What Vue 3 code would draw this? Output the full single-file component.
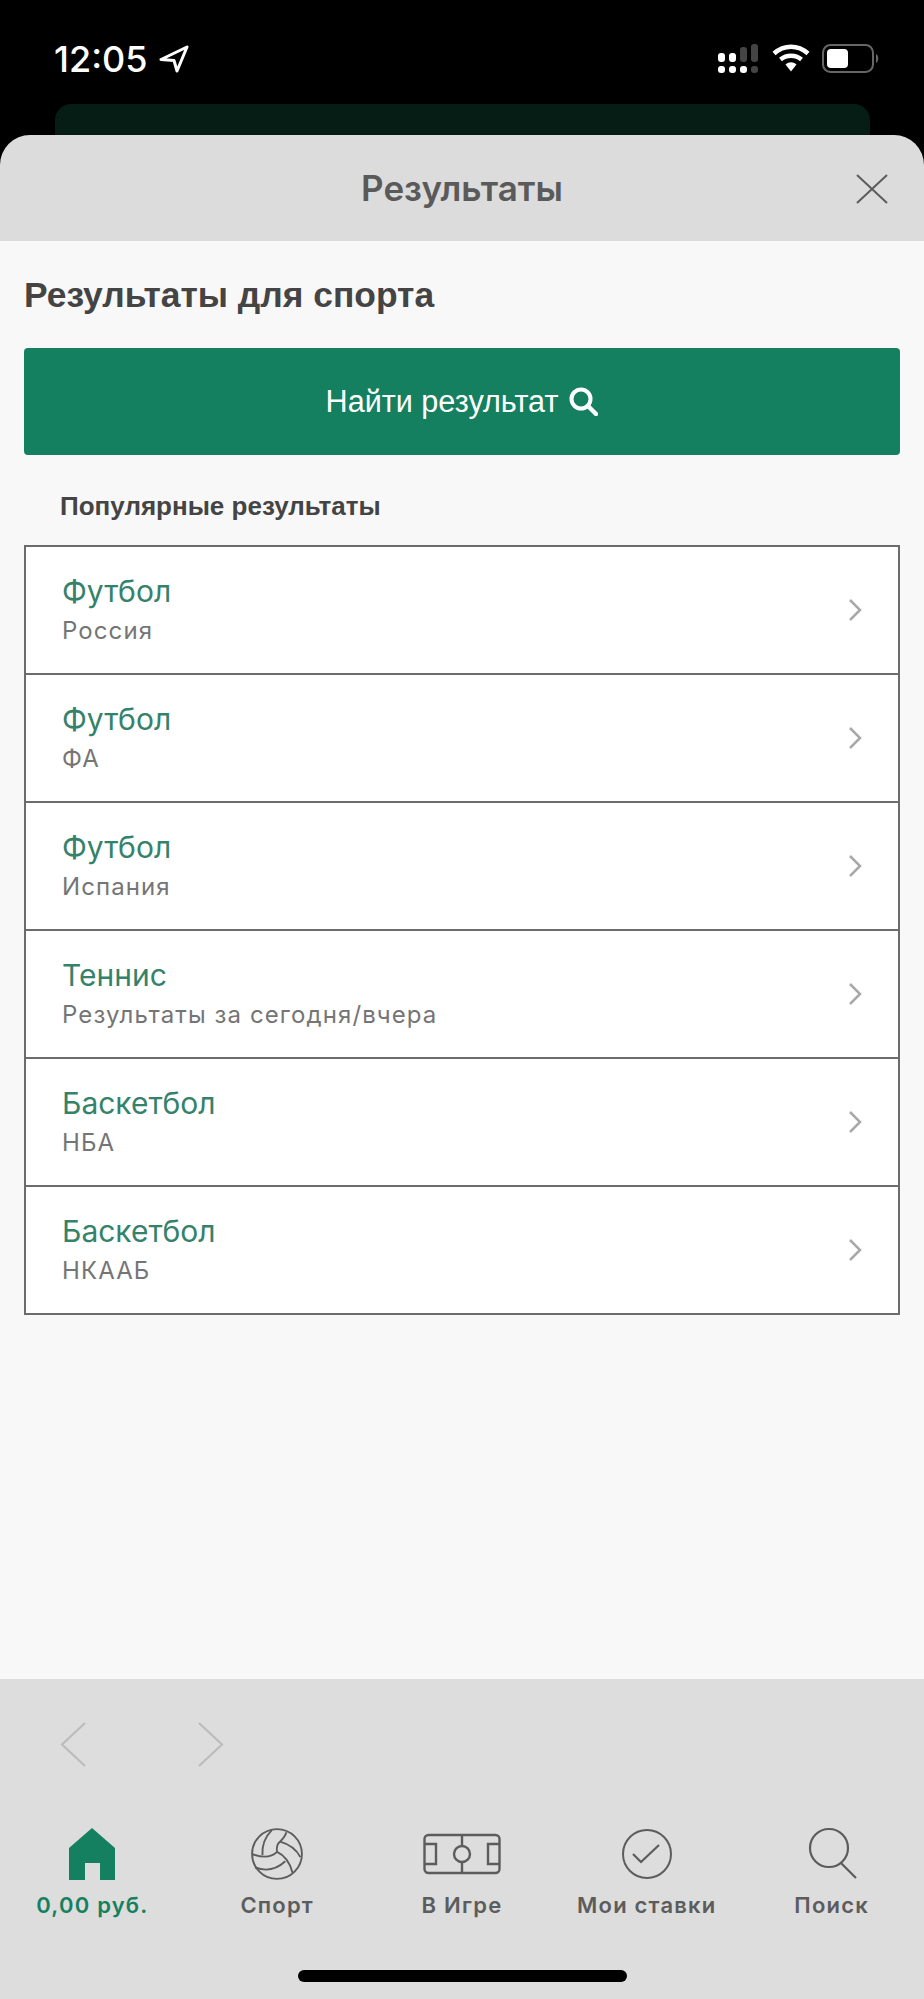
<template>
  <div class="screen">
    <div class="status">
      <div class="status-row">
        <div class="clock">
          <span>12:05</span>
          <svg width="30" height="28" viewBox="0 0 30 28" fill="none">
            <path d="M28 2 L2 14.5 L15 15.5 L18 26 Z" stroke="#fff" stroke-width="3" stroke-linejoin="round" />
          </svg>
        </div>
        <div class="status-icons">
          <svg width="42" height="30" viewBox="0 0 42 30">
            <rect x="0" y="9" width="7" height="9" rx="3" fill="#fff" />
            <rect x="11" y="9" width="7" height="9" rx="3" fill="#fff" />
            <rect x="22" y="3" width="7" height="15" rx="3" fill="#444" />
            <rect x="33" y="0" width="7" height="18" rx="3" fill="#444" />
            <rect x="0" y="22" width="7" height="7" rx="3" fill="#fff" />
            <rect x="11" y="22" width="7" height="7" rx="3" fill="#fff" />
            <rect x="22" y="22" width="7" height="7" rx="3" fill="#fff" />
            <rect x="33" y="22" width="7" height="7" rx="3" fill="#444" />
          </svg>
          <svg width="38" height="28" viewBox="0 0 38 28" fill="none">
            <path d="M2 9.5 C12 0.5 26 0.5 36 9.5" stroke="#fff" stroke-width="4.5" />
            <path d="M8.5 15.5 C14.5 10.5 23.5 10.5 29.5 15.5" stroke="#fff" stroke-width="4.5" />
            <path d="M13.5 20.5 L19 27.5 L24.5 20.5 C21 17.5 17 17.5 13.5 20.5 Z" fill="#fff" />
          </svg>
          <svg width="58" height="30" viewBox="0 0 58 30" fill="none">
            <rect x="1" y="1" width="50" height="27" rx="7.5" stroke="#666" stroke-width="2" />
            <rect x="5" y="5" width="21" height="19" rx="4" fill="#fff" />
            <path d="M54 10 C57 11 57 18 54 19 Z" fill="#666" />
          </svg>
        </div>
      </div>
      <div class="behind-card"></div>
    </div>

    <div class="sheet-head">
      <h1>Результаты</h1>
      <svg class="close" width="32" height="30" viewBox="0 0 32 30" fill="none">
        <path d="M1 1 L31 29 M31 1 L1 29" stroke="#5c5c5c" stroke-width="2" />
      </svg>
    </div>

    <main class="sheet-body">
      <h2>Результаты для спорта</h2>
      <button class="find-btn">
        Найти результат
        <svg width="29" height="29" viewBox="0 0 29 29" fill="none">
          <circle cx="12" cy="12" r="9.5" stroke="#fff" stroke-width="4" />
          <path d="M19 19 L27 27" stroke="#fff" stroke-width="4.5" stroke-linecap="round" />
        </svg>
      </button>
      <h3>Популярные результаты</h3>
      <ul class="results">
        <li v-for="(row, i) in rows" :key="i" class="result-row">
          <div>
            <div class="row-title">{{ row.title }}</div>
            <div class="row-sub">{{ row.sub }}</div>
          </div>
          <svg width="14" height="24" viewBox="0 0 14 24" fill="none">
            <path d="M2 2 L12 12 L2 22" stroke="#a8a8a8" stroke-width="2.5" />
          </svg>
        </li>
      </ul>
    </main>

    <footer class="bottom">
      <div class="nav-arrows">
        <svg width="26" height="45" viewBox="0 0 26 45" fill="none">
          <path d="M25 1 L2 22.5 L25 44" stroke="#bcbcbc" stroke-width="2.2" />
        </svg>
        <svg width="26" height="45" viewBox="0 0 26 45" fill="none">
          <path d="M1 1 L24 22.5 L1 44" stroke="#bcbcbc" stroke-width="2.2" />
        </svg>
      </div>
      <nav class="tabs">
        <div class="tab active">
          <svg width="48" height="54" viewBox="0 0 48 54">
            <path d="M24 1 L47 21 V53 H32 V36 H17 V53 H1 V21 Z" fill="#15805f" />
          </svg>
          <span>0,00 руб.</span>
        </div>
        <div class="tab">
          <svg width="52" height="54" viewBox="0 0 50 52" fill="none" stroke="#5c5c5c" stroke-width="1.8">
            <circle cx="25" cy="26" r="24" />
            <path d="M20 3 Q10 13 11 27" />
            <path d="M1 26 Q17 32 25 24" />
            <path d="M25 24 Q24 17 28 14 Q33 9 34 5" />
            <path d="M28 14 Q42 18 47.5 29" />
            <path d="M25 24 Q36 29 40 44" />
            <path d="M4 39 Q20 45 33 33" />
          </svg>
          <span>Спорт</span>
        </div>
        <div class="tab">
          <svg width="78" height="54" viewBox="0 0 78 54" fill="none" stroke="#5c5c5c" stroke-width="2.4">
            <rect x="1.5" y="8" width="75" height="38" rx="4" />
            <path d="M39 8 V19 M39 35 V46" />
            <circle cx="39" cy="27" r="8" />
            <path d="M1.5 17 H13 V37 H1.5 M76.5 17 H65 V37 H76.5" />
          </svg>
          <span>В Игре</span>
        </div>
        <div class="tab">
          <svg width="52" height="54" viewBox="0 0 52 54" fill="none" stroke="#5c5c5c" stroke-width="2">
            <circle cx="26" cy="27" r="24" />
            <path d="M12 27 L20 35 L38 18" stroke-width="2.2" />
          </svg>
          <span>Мои ставки</span>
        </div>
        <div class="tab">
          <svg width="52" height="54" viewBox="0 0 52 54" fill="none" stroke="#5c5c5c" stroke-width="2.2">
            <circle cx="23" cy="21" r="19" />
            <path d="M35 36 L50 51" />
          </svg>
          <span>Поиск</span>
        </div>
      </nav>
      <div class="home-bar"></div>
    </footer>
  </div>
</template>

<script setup>
const rows = [
  { title: 'Футбол', sub: 'Россия' },
  { title: 'Футбол', sub: 'ФА' },
  { title: 'Футбол', sub: 'Испания' },
  { title: 'Теннис', sub: 'Результаты за сегодня/вчера' },
  { title: 'Баскетбол', sub: 'НБА' },
  { title: 'Баскетбол', sub: 'НКААБ' }
]
</script>

<style>
html, body {
  margin: 0;
  background: #000;
}
</style>

<style scoped>
.screen {
  width: 924px;
  height: 1999px;
  display: flex;
  flex-direction: column;
  background: #000;
  font-family: Inter, "Noto Sans", sans-serif;
  overflow: hidden;
}

.status {
  height: 135px;
  flex: none;
  display: flex;
  flex-direction: column;
  box-sizing: border-box;
  padding-top: 44px;
}

.status-row {
  display: flex;
  justify-content: space-between;
  padding: 0 44px 0 54px;
}

.clock {
  display: flex;
  align-items: center;
  gap: 11px;
  color: #fff;
  font-size: 36px;
  font-weight: 500;
  line-height: 30px;
}

.status-icons {
  display: flex;
  align-items: flex-start;
  gap: 12px;
}

.behind-card {
  margin: auto 54px 0 55px;
  height: 31px;
  background: #051d15;
  border-radius: 16px 16px 0 0;
}

.sheet-head {
  height: 106px;
  flex: none;
  display: flex;
  align-items: center;
  justify-content: center;
  position: relative;
  background: #dcdcdc;
  border-radius: 30px 30px 0 0;
}

.sheet-head h1 {
  margin: 0;
  font-size: 35px;
  font-weight: 600;
  color: #5a5a5a;
}

.close {
  position: absolute;
  right: 36px;
  top: 39px;
}

.sheet-body {
  flex: 1;
  background: #f8f8f8;
  padding: 0 24px;
  min-height: 0;
}

.sheet-body h2 {
  margin: 0;
  padding: 33px 0 0;
  font-family: "Liberation Sans", Arial, sans-serif;
  font-size: 35.4px;
  line-height: 42px;
  font-weight: 700;
  color: #444;
}

.find-btn {
  display: flex;
  align-items: center;
  justify-content: center;
  gap: 11px;
  width: 100%;
  height: 107px;
  margin-top: 32px;
  border: none;
  border-radius: 4px;
  background: #15805f;
  color: #fff;
  font-family: "Liberation Sans", Arial, sans-serif;
  font-size: 30.6px;
}

.sheet-body h3 {
  margin: 0;
  padding: 37px 0 0 36px;
  font-family: "Liberation Sans", Arial, sans-serif;
  font-size: 26px;
  line-height: 28px;
  font-weight: 700;
  color: #444;
}

.results {
  list-style: none;
  margin: 25px 0 0;
  padding: 0;
  border: 2.5px solid #6c6c6c;
  border-bottom-width: 0;
  background: #fff;
}

.result-row {
  height: 128px;
  box-sizing: border-box;
  display: flex;
  align-items: center;
  justify-content: space-between;
  padding: 0 36px;
  border-bottom: 2.5px solid #6c6c6c;
}

.row-title {
  font-size: 30px;
  line-height: 40px;
  color: #35826b;
}

.row-sub {
  margin: 3px 0 1px;
  font-size: 24px;
  letter-spacing: 1.1px;
  line-height: 34px;
  color: #757575;
}

.bottom {
  height: 320px;
  flex: none;
  display: flex;
  flex-direction: column;
  background: #dddddd;
}

.nav-arrows {
  display: flex;
  gap: 112px;
  padding: 43px 0 0 60px;
  height: 45px;
}

.tabs {
  display: grid;
  grid-template-columns: repeat(5, 1fr);
  margin-top: 60px;
}

.tab {
  display: flex;
  flex-direction: column;
  align-items: center;
  color: #5c5c5c;
  font-size: 22px;
  font-weight: 600;
  letter-spacing: 1.2px;
  line-height: 28px;
}

.tab svg {
  display: block;
}

.tab span {
  margin-top: 10px;
}

.tab.active {
  color: #15805f;
}

.home-bar {
  width: 329px;
  height: 12px;
  margin: 51px auto 0;
  background: #000;
  border-radius: 6px;
}
</style>
